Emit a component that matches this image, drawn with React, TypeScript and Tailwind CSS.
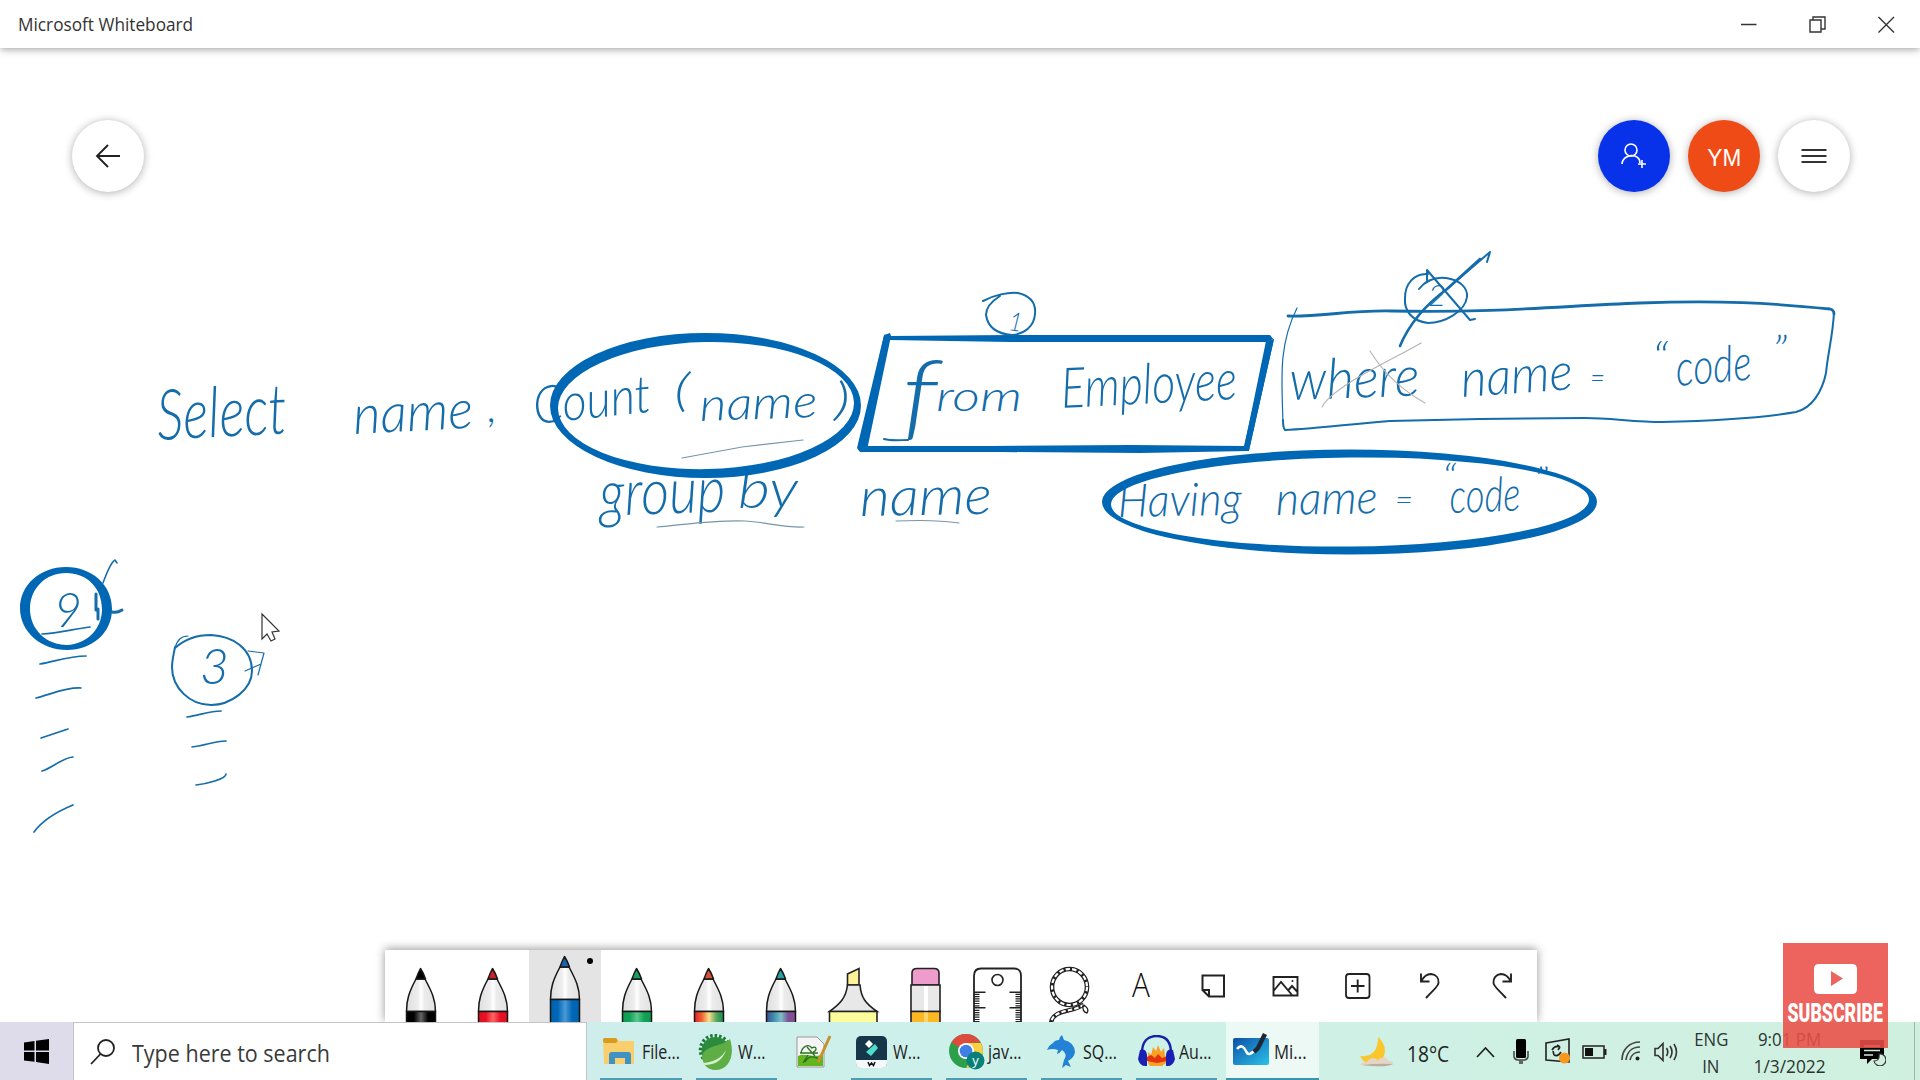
import React from "react";

const INK = "#146cab";
const PEN = "#0067b4";

type WordProps = { t: string; x: number; y: number; w: number; size: number; rot?: number; color?: string };

function Word({ t, x, y, w, size, rot = 0, color = INK }: WordProps) {
  return (
    <text
      x={x}
      y={y}
      textLength={w}
      lengthAdjust="spacingAndGlyphs"
      transform={`rotate(${rot} ${x} ${y})`}
      fill={color}
      fontSize={size}
      fontFamily="Lato, 'Open Sans', sans-serif"
      fontStyle="italic"
      fontWeight={300}
    >
      {t}
    </text>
  );
}

const words: WordProps[] = [
  { t: "Select", x: 158, y: 440, w: 130, size: 70, rot: -3 },
  { t: "name", x: 354, y: 434, w: 120, size: 54, rot: -3 },
  { t: ",", x: 488, y: 422, w: 9, size: 44 },
  { t: "Count", x: 535, y: 424, w: 118, size: 52, rot: -6 },
  { t: "(", x: 674, y: 406, w: 16, size: 46 },
  { t: "name", x: 700, y: 421, w: 118, size: 46, rot: -2 },
  { t: ")", x: 834, y: 415, w: 16, size: 46 },
  { t: "group", x: 600, y: 516, w: 126, size: 64, rot: -2 },
  { t: "by", x: 738, y: 508, w: 60, size: 54 },
  { t: "name", x: 860, y: 516, w: 132, size: 54, rot: -1 },
  { t: "f", x: 902, y: 428, w: 36, size: 94 },
  { t: "rom", x: 936, y: 411, w: 86, size: 42 },
  { t: "Employee", x: 1062, y: 408, w: 176, size: 56, rot: -3 },
  { t: "where", x: 1290, y: 400, w: 130, size: 56, rot: -2 },
  { t: "name", x: 1462, y: 397, w: 112, size: 52, rot: -4 },
  { t: "=", x: 1590, y: 388, w: 15, size: 30 },
  { t: "“", x: 1652, y: 376, w: 16, size: 48 },
  { t: "code", x: 1677, y: 386, w: 76, size: 50, rot: -5 },
  { t: "”", x: 1772, y: 368, w: 15, size: 46 },
  { t: "Having", x: 1118, y: 517, w: 124, size: 46, rot: -1 },
  { t: "name", x: 1276, y: 515, w: 102, size: 46, rot: -1 },
  { t: "=", x: 1395, y: 510, w: 18, size: 30 },
  { t: "“", x: 1442, y: 492, w: 14, size: 40 },
  { t: "code", x: 1450, y: 513, w: 71, size: 48, rot: -2 },
  { t: "”", x: 1534, y: 494, w: 14, size: 38 },
  { t: "1", x: 1008, y: 330, w: 13, size: 26, rot: 8 },
  { t: "2", x: 1428, y: 306, w: 18, size: 30 },
  { t: "9", x: 54, y: 627, w: 28, size: 48 },
  { t: "3", x: 200, y: 684, w: 29, size: 50 },
];

const dashes = [
  "M40 664C56 661 70 656 86 656",
  "M36 698C52 694 66 687 81 688",
  "M41 738L68 729",
  "M42 771C52 768 62 758 73 757",
  "M34 832C42 821 56 812 73 805",
  "M187 717C200 715 210 711 221 711",
  "M192 747C204 746 214 741 226 741",
  "M196 785C206 784 226 779 226 774",
  "M42 634C58 633 74 629 90 627",
];

function Ink() {
  return (
    <svg className="absolute left-0 top-0" width={1920} height={1022} viewBox="0 0 1920 1022" fill="none">
      {words.map((w, i) => (
        <Word key={i} {...w} />
      ))}
      <g fill={PEN} fillRule="evenodd">
        <path d="M550 405.500a155.500 72.500 0 1 0 311 0a155.500 72.500 0 1 0 -311 0ZM558 408.700a148 63.500 -1.200 1 0 296 -6.200a148 63.500 -1.200 1 0 -296 6.200Z" />
        <path d="M1102 502a247.500 52.500 0 1 0 495 0a247.500 52.500 0 1 0 -495 0ZM1111 504.500a239 44.500 -0.600 1 0 478 -5a239 44.500 -0.600 1 0 -478 5Z" />
        <path d="M20 608C20 585 40 567 66 567C92 567 112 585 112 609C112 633 92 650 67 650C41 650 20 632 20 608ZM30 609C30 630 47 645 67 645C87 644 102 629 102 609C102 588 87 573 66 573C46 573 30 588 30 609Z" />
        <path d="M884 335L890 333L891 336L1010 335L1270 335L1274 340L1270 342L1010 342L889 340L866 446L990 446L1130 445L1244 446L1268 341L1274 339L1249 451L1140 453L1000 452L860 452L857 448Z" />
        <path d="M884 336L891 336L867 450L858 450ZM1266 341L1274 339L1249 450L1244 448Z" />
      </g>
      <g stroke={INK} strokeWidth={2} strokeLinecap="round" strokeLinejoin="round">
        <path d="M983 301C994 295 1008 292 1018 293C1031 296 1036 304 1035 314C1034 327 1024 334 1012 335C998 334 988 328 986 315C986 307 992 301 1000 296" />
        <path strokeWidth={2.8} d="M1288 316C1320 317 1350 310 1392 311C1500 313 1560 306 1640 303C1720 300 1770 303 1830 309Q1834 310 1834 314" />
        <path d="M1834 312C1833 335 1828 352 1826 373C1822 392 1812 408 1796 412C1755 419 1705 421 1662 422C1635 422 1610 418 1585 418L1480 419L1390 421C1350 424 1315 429 1285 430Q1283 428 1283 420" />
        <path strokeWidth={1.2} d="M1283 422C1282 395 1281 375 1283 357C1285 338 1290 322 1297 308" />
        <path d="M1419 289C1426 280 1436 277 1446 278C1460 280 1468 288 1467 297C1465 312 1444 323 1428 323C1411 321 1404 310 1405 298C1405 284 1414 273 1428 274" />
        <path strokeWidth={2.6} d="M1400 346C1410 322 1428 303 1447 289L1480 259" />
        <path d="M1447 289L1490 252L1487 262M1427 280L1427 270L1470 320L1475 319" />
        <path d="M175 648C186 638 198 635 211 635C232 636 252 648 252 671C252 690 230 705 211 705C190 705 172 688 172 667C172 660 174 653 175 647" />
        <path strokeWidth={1.2} d="M175 648C177 640 181 636 188 636M248 651L264 653L258 675M245 671L261 664" />
        <path strokeWidth={1.5} d="M103 583C107 572 111 562 115 560L117 563" />
        <path strokeWidth={3} d="M96 594V610M98 619V609M112 612C116 613 119 612 122 610" />
        <path d="M884 439C892 441 900 440 908 440" />
        {dashes.map((d) => (
          <path key={d} strokeWidth={1.7} d={d} />
        ))}
      </g>
      <g stroke="#7596a8" strokeWidth={1.2} strokeLinecap="round">
        <path d="M682 458L742 447L803 440M657 527C690 524 715 520 745 521C765 522 785 528 804 527M896 521C920 520 940 520 959 523" />
        <path stroke="#b5b5b5" d="M1322 407C1332 386 1400 356 1421 343M1370 351C1384 374 1402 390 1425 403" />
      </g>
      <path d="M262 614V639L267 634L271 641L275 639L272 632L279 631Z" fill="#fff" stroke="#333" strokeWidth={1.2} />
    </svg>
  );
}

function Pen({ id, tip, band, lift = false }: { id: string; tip: string; band: string[]; lift?: boolean }) {
  return (
    <svg width={72} height={72} viewBox="0 0 72 72" className="block">
      <defs>
        <linearGradient id={id}>
          {band.map((c, i) => (
            <stop key={i} offset={i / (band.length - 1)} stopColor={c} />
          ))}
        </linearGradient>
        <linearGradient id={id + "b"}>
          <stop offset="0" stopColor="#dedede" />
          <stop offset=".4" stopColor="#eee" />
          <stop offset=".5" stopColor="#fff" />
          <stop offset=".62" stopColor="#ececec" />
          <stop offset="1" stopColor="#e2e2e2" />
        </linearGradient>
      </defs>
      <g transform={lift ? "translate(0 -12)" : undefined} stroke="#161616" strokeWidth={1.5} strokeLinejoin="round">
        <path d="M31 29C24 42 21.500 50 21.500 61.500H50.500C50.500 50 47 42 40 29Z" fill={`url(#${id}b)`} />
        <path d="M35.500 18.500Q33 23 31 29H40.500Q38.500 23 35.500 18.500Z" fill={tip} />
        <path d="M21.500 61.500H50.500V90H21.500Z" fill={`url(#${id})`} />
      </g>
    </svg>
  );
}

function Glyph({ children }: { children: React.ReactNode }) {
  return (
    <svg width={72} height={72} viewBox="0 0 72 72" fill="none" stroke="#222" strokeWidth={1.6} className="block">
      {children}
    </svg>
  );
}

const minorTicks = [44.3, 46.6, 48.9, 51.2, 53.5, 55.8, 60.3, 62.6, 64.9, 67.2, 69.5, 71.5];

function Toolbar() {
  return (
    <div className="flex h-[72px] w-[1152px] overflow-hidden bg-white">
      <Pen id="p1" tip="#000" band={["#000", "#000", "#666", "#000", "#000"]} />
      <Pen id="p2" tip="#c8202c" band={["#e01020", "#e81123", "#f66", "#e81123", "#e01020"]} />
      <div className="bg-[#e4e4e4]">
        <Pen id="p3" tip="#1c62a8" band={["#0062ad", "#0067b8", "#4a9ad6", "#0067b8", "#0062ad"]} lift />
      </div>
      <Pen id="p4" tip="#1ba05c" band={["#0e9a52", "#11a357", "#5cc68c", "#11a357", "#0e9a52"]} />
      <Pen id="p5" tip="#d4523c" band={["#e0202c", "#f06030", "#fbe08a", "#5aa860", "#188850"]} />
      <Pen id="p6" tip="#2a9ea4" band={["#404a90", "#3c8fae", "#7fc0c8", "#7a5498", "#8a4a90"]} />
      <Glyph>
        <path d="M30.500 24L42 18.500V35H30.500Z" fill="#fdf29a" />
        <path d="M30.500 35H43C44 48 49 54 60 61.500H12.500C23 54 29 48 30.500 35Z" fill="#e8e8e8" />
        <path d="M12.500 61.500H60V80H12.500Z" fill="#fefd9c" />
      </Glyph>
      <Glyph>
        <path d="M23 35V23Q23 18.500 28 18.500H45Q50 18.500 50 23V35Z" fill="#ee9ccb" />
        <path d="M22 35H51V61.500H22Z" fill="#e8e8e8" />
        <path d="M35 36H39V61H35Z" fill="#fff" stroke="none" />
        <path d="M22 61.500H51V80H22Z" fill="#fdb924" />
        <path d="M35 62.500H39V72H35Z" fill="#ffd36e" stroke="none" />
      </Glyph>
      <Glyph>
        <path d="M13 80V26Q13 18.500 20 18.500H53Q60 18.500 60 26V80" strokeWidth={1.8} />
        <circle cx="36.500" cy="30" r="5.500" />
        <path d="M13 42.200H24.500M13 57.800H24.500M60 42.200H48.500M60 57.800H48.500" />
        {minorTicks.map((y) => (
          <path key={y} strokeWidth={1.2} d={`M13 ${y}h5.500M60 ${y}h-5.500`} />
        ))}
      </Glyph>
      <Glyph>
        <ellipse cx="36.500" cy="37" rx="17.500" ry="18" strokeWidth={4.6} />
        <ellipse cx="36.500" cy="37" rx="17.500" ry="18" stroke="#fff" strokeWidth={2.2} strokeDasharray="4.400 2.200" />
        <path d="M51 54C42 63 20 58 18 73" strokeWidth={4.4} />
        <path d="M51 54C42 63 20 58 18 73" stroke="#fff" strokeWidth={2} strokeDasharray="4.400 2.200" />
        <path d="M50 55Q57 58 54 63Q49 62 50 55Z" strokeWidth={1.3} />
      </Glyph>
      <div className="flex h-[72px] w-[72px] items-center justify-center">
        <span className="mt-[-3px] inline-block scale-x-[0.9] font-['Open_Sans'] text-[33px] leading-none font-light text-[#111]">A</span>
      </div>
      <Glyph>
        <path d="M25.500 25.500H47V46.500H32L25.500 40ZM25.500 40H32V46.500" strokeWidth={2} />
      </Glyph>
      <Glyph>
        <path d="M24.500 27H48.500V45.500H24.500ZM24.500 41L32 32L43 45M39.500 40L43 36L48.500 42" strokeWidth={1.9} />
        <circle cx="43.500" cy="31" r="1" fill="#222" stroke="none" />
      </Glyph>
      <Glyph>
        <rect x="25" y="24" width="23.500" height="24" rx="3" strokeWidth={1.8} />
        <path d="M36.700 29.500V42.500M30 36H43.500" strokeWidth={1.9} />
      </Glyph>
      <Glyph>
        <path d="M28 23.500V31.500H36.500M28.500 31C31 26 34.500 24 38 24C43 24.500 46 28 45.500 33C45 37 40 40 33 48" strokeWidth={1.9} />
      </Glyph>
      <Glyph>
        <path d="M46 23.500V31.500H37.500M45.500 31C43 26 39.500 24 36 24C31 24.500 28 28 28.500 33C29 37 34 40 41 48" strokeWidth={1.9} />
      </Glyph>
    </div>
  );
}

function Round({ className, children }: { className: string; children: React.ReactNode }) {
  return (
    <div className={"flex h-[72px] w-[72px] items-center justify-center rounded-full shadow-[0_1px_9px_rgba(0,0,0,0.32)] " + className}>
      {children}
    </div>
  );
}

function TaskItem({ className, textClass, label, children }: { className: string; textClass?: string; label?: string; children: React.ReactNode }) {
  return (
    <div className={"flex h-[58px] shrink-0 items-center border-b-2 pt-[3px] " + className}>
      {children}
      {label && (
        <span className={"inline-block origin-left whitespace-nowrap text-[20px] leading-none text-[#222] " + (textClass ?? "")}>{label}</span>
      )}
    </div>
  );
}

function Taskbar() {
  return (
    <div className="flex h-[58px] overflow-hidden bg-linear-to-r from-[#d0e8ee] via-[#cdf1ea] via-50% to-[#d0f0df] font-['Open_Sans',sans-serif]">
      <div className="flex w-[73px] shrink-0 items-center justify-center bg-[#dedcea]">
        <svg width={25} height={25} viewBox="0 0 25 28" preserveAspectRatio="none" className="mt-[1px]">
          <path d="M0 4L10.500 2.200V13H0ZM12 2L25 0V13H12ZM0 14.500H10.500V25.500L0 24ZM12 14.500H25V28L12 25.800Z" fill="#000" />
        </svg>
      </div>
      <div className="flex w-[514px] shrink-0 items-center border-x border-t border-[#c4c4c8] bg-white pt-[3px] pl-[16px]">
        <svg width={26} height={26} viewBox="0 0 26 26" fill="none" stroke="#222" strokeWidth={1.8} className="mt-[-2px]">
          <circle cx="16" cy="9" r="8" />
          <path d="M10.500 15L1 25" />
        </svg>
        <span className="ml-[16px] inline-block origin-left scale-x-[0.935] whitespace-nowrap text-[23px] leading-none text-[#3a3a3a]">
          Type here to search
        </span>
      </div>

      <TaskItem className="ml-[13px] w-[82px] border-[#4f9db4] pl-[3px]" label="File..." textClass="ml-[6px] scale-x-[0.8]">
        <svg width={33} height={27} viewBox="0 0 33 27" className="shrink-0">
          <path d="M0 0H13L16 3H31V26H1Z" fill="#f8cf6c" />
          <path d="M1 0H13Q16 3 13 5H1Q-1 2 1 0Z" fill="#d89b22" />
          <path d="M6 26V17Q6 14 9 14H25Q28 14 28 17V26H22V20H12V26Z" fill="#3f93c4" />
        </svg>
      </TaskItem>
      <TaskItem className="ml-[14px] w-[81px] border-[#4f9db4] pl-[2px]" label="W..." textClass="ml-[5px] scale-x-[0.8]">
        <svg width={35} height={36} viewBox="0 0 35 36" className="shrink-0">
          <circle cx="17" cy="16" r="14.500" fill="none" stroke="#1d7a38" strokeWidth={3.5} strokeDasharray="2.500 2" />
          <circle cx="17.500" cy="17" r="14" fill="#2d8b3e" />
          <path d="M4 23C7 10 22 14 32 5C37 20 32 36 17 36C10 36 5 31 4 23Z" fill="#5fae45" />
          <path d="M4 29C14 29 24 24 28 16C25 26 17 31 7 31Z" fill="#d7efcc" />
        </svg>
      </TaskItem>
      <TaskItem className="ml-[14px] w-[46px] border-transparent pl-[5px]">
        <svg width={36} height={34} viewBox="0 0 36 34" className="shrink-0">
          <path d="M1 2H21L28 9V32H1Z" fill="#f5f5f5" stroke="#999" />
          <path d="M2 21C9 17 18 24 27 19V31H2Z" fill="#62b51d" />
          <path d="M5 18C6 12 12 8 16 13C20 10 22 15 17 17M4 18H22M9 27C12 21 18 20 24 25M7 28L12 20M11 12L19 21" fill="none" stroke="#2c7020" strokeWidth={1.3} />
          <path d="M34 1L24 23L22 27" stroke="#c79331" strokeWidth={3} fill="none" />
        </svg>
      </TaskItem>
      <TaskItem className="ml-[14px] w-[81px] border-[#4f9db4] pl-[5px]" label="W..." textClass="ml-[6px] scale-x-[0.8]">
        <svg width={31} height={32} viewBox="0 0 31 32" className="shrink-0">
          <rect width="31" height="32" rx="5" fill="#16374a" />
          <path d="M0 24H31V27Q31 32 26 32H5Q0 32 0 27Z" fill="#f4f8f8" />
          <path d="M13 4L17 8L13 12L9 8Z" fill="#fff" />
          <path d="M19 8L22 12L15 20L10 16Z" fill="#4be0c8" />
          <path d="M12 26L13.500 29.500L15.500 27L17.500 29.500L19 26" fill="none" stroke="#111" strokeWidth={1.5} />
        </svg>
      </TaskItem>
      <TaskItem className="ml-[14px] w-[81px] border-[#4f9db4] pl-[3px]" label="jav..." textClass="ml-[3px] scale-x-[0.8]">
        <svg width={36} height={36} viewBox="0 0 36 36" className="shrink-0">
          <circle cx="17" cy="17" r="17" fill="#2c9f4b" />
          <path d="M17 17L2.300 8.500A17 17 0 0 1 31.700 8.500L17 9Z" fill="#dd4b3e" />
          <path d="M17 9H31.900A17 17 0 0 1 17 34L24 21Z" fill="#f9cf43" />
          <circle cx="17" cy="17" r="8" fill="#fff" />
          <circle cx="17" cy="17" r="6.300" fill="#3f7fe8" />
          <circle cx="26.500" cy="26.500" r="9" fill="#07807a" />
          <text x="26.500" y="30.500" textAnchor="middle" fontSize="13" fill="#fff" fontFamily="Open Sans">y</text>
        </svg>
      </TaskItem>
      <TaskItem className="ml-[14px] w-[81px] border-[#4f9db4] pl-[6px]" label="SQ..." textClass="ml-[6px] scale-x-[0.8]">
        <svg width={30} height={34} viewBox="0 0 30 34" className="shrink-0">
          <path d="M0 15Q2 10 6 8Q8 5 12 5Q12 2 15 0L17 5Q27 7 28 17Q27 23 21 26L24 32L19 30L15 33L17 25Q21 19 15 15Q13 18 10 19L11 15Q5 13 0 15Z" fill="#2382d6" />
        </svg>
      </TaskItem>
      <TaskItem className="ml-[14px] w-[81px] border-[#4f9db4] pl-[2px]" label="Au..." textClass="ml-[4px] scale-x-[0.8]">
        <svg width={37} height={34} viewBox="0 0 37 34" className="shrink-0">
          <path d="M10 28V17L13 20L15 12L18 16L20 10L23 17L26 13L28 28L24 31H12Z" fill="#f9a125" />
          <path d="M9 22L13 20L17 23L20 19L24 23L29 21V26L19 28L9 26Z" fill="#e2330e" />
          <path d="M4 18C4 6 10 1 18.500 1C27 1 33 6 33 18" fill="none" stroke="#1722a8" strokeWidth={2.4} />
          <path d="M2 15Q8 13 9 20V31Q2 32 0 24ZM35 15Q29 13 28 20V31Q35 32 37 24Z" fill="#1821b4" />
        </svg>
      </TaskItem>
      <TaskItem className="ml-[9px] w-[93px] border-[#3c95ae] bg-[#edf9f4] pl-[7px]" label="Mi..." textClass="ml-[5px] scale-x-[0.84]">
        <svg width={36} height={34} viewBox="0 0 36 34" className="mt-[-5px] shrink-0">
          <defs>
            <linearGradient id="wb" x1="0" y1="0" x2="1" y2="1">
              <stop offset="0" stopColor="#0d4fa8" />
              <stop offset="1" stopColor="#2ac3e8" />
            </linearGradient>
          </defs>
          <rect y="6" width="36" height="27" rx="2" fill="url(#wb)" />
          <path d="M4 17C8 12 11 15 13 19C15 24 18 22 21 19" fill="none" stroke="#fff" strokeWidth={2.500} />
          <path d="M32 2L25 16L21 20" stroke="#1d2736" strokeWidth={4.5} fill="none" />
        </svg>
      </TaskItem>

      <div className="ml-[40px] flex shrink-0 items-center pt-[1px]">
        <svg width={36} height={32} viewBox="0 0 36 32">
          <path d="M19 1C30 10 28 27 12 28Q4 27 1 20Q19 22 19 1Z" fill="#fbc62b" />
          <path d="M1 29Q3 25 8 26Q12 19 19 24Q26 18 30 25Q35 25 34 28Q25 32 1 29Z" fill="#e4d6c4" />
          <path d="M3 29Q20 27 34 28Q26 32 3 29Z" fill="#bcab9c" />
        </svg>
        <span className="mt-[3px] ml-[12px] inline-block w-[44px] origin-left scale-x-[0.87] whitespace-nowrap text-[22px] leading-none text-[#1c2420]">18°C</span>
        <svg className="ml-[25px]" width={19} height={12} viewBox="0 0 19 12" fill="none" stroke="#222" strokeWidth={1.7}>
          <path d="M1 11L9.500 2L18 11" />
        </svg>
        <svg className="ml-[18px]" width={16} height={26} viewBox="0 0 16 26">
          <rect x="3" y="0" width="10" height="19" rx="1.500" fill="#000" />
          <path d="M1 12V18Q2 21 5 21H11Q14 21 15 18V12" fill="none" stroke="#444" strokeWidth={1.5} />
          <path d="M6 21H10V25H6Z" fill="#666" />
        </svg>
        <svg className="ml-[16px]" width={27} height={27} viewBox="0 0 27 27" fill="none" stroke="#222" strokeWidth={1.6}>
          <path d="M1 5L24 1V24L1 22Z" />
          <path d="M7 12Q10 7 15 9M15 9L12 7M15 9L13 12M16 14Q13 19 9 17M9 17L8 13" />
          <circle cx="19.500" cy="20" r="5.500" fill="#f8981d" stroke="none" />
        </svg>
        <svg className="ml-[10px]" width={25} height={14} viewBox="0 0 25 14">
          <rect x="1" y="1" width="21" height="12" fill="none" stroke="#222" strokeWidth={1.5} />
          <path d="M3 3H11V11H3Z" fill="#111" />
          <path d="M22 4H24.500V10H22Z" fill="#222" />
        </svg>
        <svg className="ml-[14px]" width={20} height={21} viewBox="0 0 20 21" fill="none" stroke="#444" strokeWidth={1.7}>
          <path d="M1 19C1 9 8 1 19 1M5 19C6 11 11 6 19 6M9 19C10 14 14 11 19 11" />
          <circle cx="16.500" cy="17.500" r="2" fill="#222" stroke="none" />
        </svg>
        <svg className="ml-[13px]" width={25} height={20} viewBox="0 0 25 20" fill="none" stroke="#333" strokeWidth={1.6}>
          <path d="M1 6.500H4L9 1.500V18.500L4 13.500H1Z" />
          <path d="M12.500 6Q15 10 12.500 14M16 4Q20 10 16 16M20 2Q25 10 20 18" />
        </svg>
      </div>
      <div className="ml-[15px] flex w-[34px] shrink-0 flex-col items-center justify-center pt-[3px] text-[19px] leading-[27px] text-[#2b3430]">
        <span className="inline-block scale-x-[0.88]">ENG</span>
        <span className="inline-block scale-x-[0.88]">IN</span>
      </div>
      <div className="ml-[24px] flex w-[76px] shrink-0 flex-col items-center justify-center whitespace-nowrap pt-[3px] text-[19px] leading-[27px] text-[#2b3430]">
        <span className="inline-block scale-x-[0.89]">9:01 PM</span>
        <span className="inline-block scale-x-[0.91]">1/3/2022</span>
      </div>
      <svg className="mt-[18px] ml-[32px] shrink-0" width={26} height={26} viewBox="0 0 26 26">
        <path d="M0 0H24V19H12L7 24V19H0Z" fill="#000" />
        <path d="M4 6H20M4 10.500H20M4 15H13" stroke="#d0f0df" strokeWidth={1.5} />
        <path d="M19 14A6 6 0 1 1 14 21Q20 21 19 14Z" fill="#d0f0df" stroke="#333" strokeWidth={1.2} />
      </svg>
      <div className="ml-[28px] w-[5px] shrink-0 border-l border-[#9fb5aa]" />
    </div>
  );
}

function Subscribe() {
  return (
    <div className="absolute top-[943px] left-[1783px] flex h-[105px] w-[105px] flex-col items-center bg-[#e94f47]/88 pt-[21px]">
      <svg width={43} height={30} viewBox="0 0 43 30">
        <path d="M5 0H38Q43 0 43 5V25Q43 30 38 30H5Q0 30 0 25V5Q0 0 5 0ZM17 7V22L29 14.500Z" fill="#fff" fillRule="evenodd" />
      </svg>
      <span className="mt-[7px] inline-block scale-x-[0.71] font-[Roboto] text-[25px] leading-[26px] font-black text-white">SUBSCRIBE</span>
    </div>
  );
}

export default function App() {
  return (
    <div className="relative flex h-[1080px] w-[1920px] flex-col overflow-hidden bg-white font-['Open_Sans',sans-serif]">
      <Ink />
      <header className="relative flex h-[48px] shrink-0 items-center justify-between bg-white pr-[25px] pl-[18px] shadow-[0_1px_8px_rgba(0,0,0,0.4)]">
        <span className="inline-block origin-left scale-x-[0.957] text-[18px] leading-none text-[#333]">Microsoft Whiteboard</span>
        <svg width={155} height={20} viewBox="0 0 155 20" fill="none" stroke="#333" strokeWidth={1.4}>
          <path d="M1 10.500H16.500M138.500 3L154 18.500M154 3L138.500 18.500" />
          <path d="M70 6H81V18H70ZM73 6V3H85V15H81" />
        </svg>
      </header>
      <main className="relative flex min-h-0 flex-1 flex-col items-center justify-between pt-[72px]">
        <div className="flex w-full items-center justify-between pr-[70px] pl-[72px]">
          <Round className="bg-white">
            <svg width={26} height={24} viewBox="0 0 26 24" fill="none" stroke="#222" strokeWidth={1.9}>
              <path d="M25 12H2M13 1L2 12L13 23" />
            </svg>
          </Round>
          <div className="flex gap-[18px]">
            <Round className="bg-[#0832ea]">
              <svg width={26} height={26} viewBox="0 0 26 26" fill="none" stroke="#fff" strokeWidth={1.6}>
                <circle cx="10" cy="7" r="6" />
                <path d="M1 21C1 11 19 9 19 20M21 17V25M17 21H25" />
              </svg>
            </Round>
            <Round className="bg-[#ee4b17]">
              <span className="mt-[4px] inline-block scale-x-[0.98] font-['Liberation_Sans'] text-[23px] leading-none text-white">YM</span>
            </Round>
            <Round className="bg-white">
              <svg width={26} height={16} viewBox="0 0 26 16" stroke="#333" strokeWidth={2}>
                <path d="M0.500 2H25.500M0.500 8H25.500M0.500 14H25.500" />
              </svg>
            </Round>
          </div>
        </div>
        <div className="relative mr-px h-[72px] translate-x-[1px] shadow-[0_-1px_9px_rgba(0,0,0,0.42)]">
          <Toolbar />
          <span className="absolute top-[8px] left-[202px] h-[6px] w-[6px] rounded-full bg-black" />
        </div>
      </main>
      <footer className="relative">
        <Taskbar />
      </footer>
      <Subscribe />
    </div>
  );
}
